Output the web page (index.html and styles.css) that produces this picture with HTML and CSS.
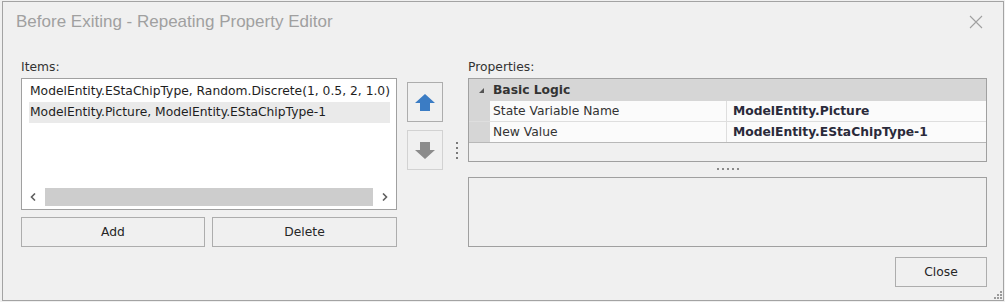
FILE: index.html
```html
<!doctype html>
<html>
<head>
<meta charset="utf-8">
<title>Before Exiting - Repeating Property Editor</title>
<link rel="stylesheet" href="styles.css">
</head>
<body>
<div class="window">
	<div class="titlebar">
		<span class="title">Before Exiting - Repeating Property Editor</span>
		<svg class="close-x" width="14" height="14" viewBox="0 0 14 14"><path d="M1 1L13 13M13 1L1 13" stroke="#a0a0a0" stroke-width="1.1" fill="none"/></svg>
	</div>
	<div class="content">
		<div class="items-col">
			<div class="label">Items:</div>
			<div class="listbox">
				<div class="list-rows">
					<div class="list-row">ModelEntity.EStaChipType, Random.Discrete(1, 0.5, 2, 1.0)</div>
					<div class="list-row on">ModelEntity.Picture, ModelEntity.EStaChipType-1</div>
				</div>
				<div class="hscroll">
					<span class="sb-arrow"><svg width="6" height="8" viewBox="0 0 6 8"><path d="M5 0.5L1.5 4L5 7.5" stroke="#606060" stroke-width="1.6" fill="none"/></svg></span>
					<span class="sb-track"><span class="sb-thumb"></span></span>
					<span class="sb-arrow"><svg width="6" height="8" viewBox="0 0 6 8"><path d="M1 0.5L4.5 4L1 7.5" stroke="#606060" stroke-width="1.6" fill="none"/></svg></span>
				</div>
			</div>
			<div class="btn-row">
				<button class="btn">Add</button>
				<button class="btn">Delete</button>
			</div>
		</div>
		<div class="move-col">
			<button class="move-btn"><svg width="20" height="17" viewBox="0 0 20 17"><polygon points="10,0 20,9 15,9 15,17 5,17 5,9 0,9" fill="#3b7cc4"/></svg></button>
			<button class="move-btn off"><svg width="20" height="17" viewBox="0 0 20 17"><polygon points="5,0 15,0 15,8 20,8 10,17 0,8 5,8" fill="#8c8c8c"/></svg></button>
		</div>
		<div class="vsplit">
			<span class="dot"></span><span class="dot"></span><span class="dot"></span><span class="dot"></span>
		</div>
		<div class="props-col">
			<div class="label">Properties:</div>
			<div class="pgrid">
				<div class="pg-cat">
					<span class="pg-gutter"><svg width="5" height="5" viewBox="0 0 5 5"><polygon points="5,0 5,5 0,5" fill="#555"/></svg></span>
					<span class="pg-cat-name">Basic Logic</span>
				</div>
				<div class="pg-row">
					<span class="pg-gutter"></span>
					<span class="pg-name">State Variable Name</span>
					<span class="pg-value">ModelEntity.Picture</span>
				</div>
				<div class="pg-row last">
					<span class="pg-gutter"></span>
					<span class="pg-name">New Value</span>
					<span class="pg-value">ModelEntity.EStaChipType-1</span>
				</div>
				<div class="pg-empty"></div>
			</div>
			<div class="hsplit">
				<span class="dot"></span><span class="dot"></span><span class="dot"></span><span class="dot"></span><span class="dot"></span>
			</div>
			<div class="desc"></div>
		</div>
	</div>
	<div class="footer">
		<button class="btn close-btn">Close</button>
	</div>
	<svg class="grip" width="8" height="8" viewBox="0 0 8 8"><g fill="#9a9a9a"><rect x="6" y="0" width="2" height="2"/><rect x="3" y="3" width="2" height="2"/><rect x="6" y="3" width="2" height="2"/><rect x="0" y="6" width="2" height="2"/><rect x="3" y="6" width="2" height="2"/><rect x="6" y="6" width="2" height="2"/></g></svg>
</div>
</body>
</html>
```
FILE: styles.css
```css
*{margin:0; padding:0; box-sizing:border-box;}
body{background:#f0f0f0; padding:1px 0 0 2px; font-family:"DejaVu Sans", sans-serif; font-size:12.3px; color:#222;}
.window{width:1002px; height:300px; border:1px solid #a3a3a3; background:#f0f0f0; position:relative; display:flex; flex-direction:column;}
.titlebar{height:40px; display:flex; align-items:center; justify-content:space-between; padding:0 20px 0 13px;}
.title{font-family:"Liberation Sans", sans-serif; font-size:17px; color:#a0a0a0;}
.close-x{display:block; margin-top:-1px;}
.content{display:flex; padding:14px 16px 0 18px;}
.label{height:22px; line-height:22px; color:#333;}
.items-col{width:376px;}
.listbox{height:132px; border:1px solid #a0a0a0; background:#fff; display:flex; flex-direction:column; padding-bottom:2px;}
.list-rows{flex:1; padding:2px 0 0 7px;}
.list-row{width:361px; height:21px; line-height:21px; padding-left:1px; white-space:nowrap; overflow:hidden; color:#1e1e1e;}
.list-row.on{background:#eaeaea;}
.hscroll{height:20px; display:flex; align-items:center;}
.sb-arrow{width:22px; height:20px; display:flex; align-items:center; justify-content:center;}
.sb-track{flex:1; height:20px; padding:1px;}
.sb-thumb{display:block; height:18px; background:#cdcdcd;}
.btn-row{display:grid; grid-template-columns:184px 185px; gap:7px; margin-top:7px;}
.btn{height:30px; border:1px solid #adadad; background:#f0f0f0; font-family:"DejaVu Sans", sans-serif; font-size:12.3px; color:#262626;}
.move-col{margin-left:10px; padding-top:26px; display:flex; flex-direction:column; gap:8px;}
.move-btn{width:36px; height:40px; border:1px solid #adadad; background:#f0f0f0; display:flex; align-items:center; justify-content:center;}
.move-btn.off{border-color:#d2d2d2;}
.vsplit{width:25px; padding:86px 0 0 13px; display:flex; flex-direction:column; gap:3px;}
.vsplit .dot{display:block; width:2px; height:2px; background:#7a7a7a;}
.props-col{width:519px;}
.pgrid{height:84px; border:1px solid #a0a0a0; display:flex; flex-direction:column;}
.pg-cat{height:22px; background:#d6d6d6; display:flex; align-items:center; font-weight:bold; color:#333;}
.pg-gutter{width:21px; align-self:stretch; background:#d6d6d6; display:flex; align-items:center; justify-content:flex-end; padding-right:6px;}
.pg-cat-name{padding-left:3px;}
.pg-row{height:21px; display:flex; border-bottom:1px solid #dedede; background:#fbfbfb;}
.pg-row.last{border-bottom-color:#b8b8b8;}
.pg-name{width:237px; line-height:20px; padding-left:3px; border-right:1px solid #dedede; color:#333;}
.pg-value{flex:1; line-height:20px; padding-left:6px; font-weight:bold; color:#2a2a3a;}
.pg-empty{flex:1;}
.hsplit{height:15px; display:flex; justify-content:center; padding-top:6px; gap:3px;}
.hsplit .dot{display:block; width:2px; height:2px; background:#8a8a8a;}
.desc{height:70px; border:1px solid #a0a0a0;}
.footer{display:flex; justify-content:flex-end; padding:10px 16px 0 0;}
.close-btn{width:92px;}
.grip{position:absolute; right:1px; bottom:1px;}
```
